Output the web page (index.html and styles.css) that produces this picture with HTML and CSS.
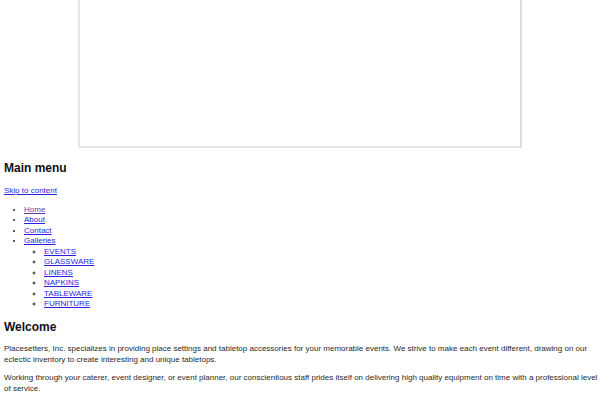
FILE: index.html
```html
<!DOCTYPE html>
<html lang="en">
<head>
    <meta charset="UTF-8">
    <meta name="viewport" content="width=device-width, initial-scale=1.0">
    <title>Placesetters, Inc.</title>
    <link rel="stylesheet" href="styles.css">
</head>
<body>
    <div class="slideshow"></div>

    <h2 class="menu-title">Main menu</h2>
    <a class="skip-link" href="#content">Skip to content</a>

    <ul class="menu">
        <li><a class="visited" href="#">Home</a></li>
        <li><a href="#">About</a></li>
        <li><a href="#">Contact</a></li>
        <li><a href="#">Galleries</a>
            <ul>
                <li><a href="#">EVENTS</a></li>
                <li><a href="#">GLASSWARE</a></li>
                <li><a href="#">LINENS</a></li>
                <li><a href="#">NAPKINS</a></li>
                <li><a href="#">TABLEWARE</a></li>
                <li><a href="#">FURNITURE</a></li>
            </ul>
        </li>
    </ul>

    <div id="content">
        <h2>Welcome</h2>
        <p>Placesetters, Inc. specializes in providing place settings and tabletop accessories for your memorable events. We strive to make each event different, drawing on our eclectic inventory to create interesting and unique tabletops.</p>
        <p>Working through your caterer, event designer, or event planner, our conscientious staff prides itself on delivering high quality equipment on time with a professional level of service.</p>
    </div>
</body>
</html>
```

FILE: styles.css
```css
body {
    margin: 0 0 0 4px;
    font-family: "Liberation Sans", Arial, sans-serif;
    font-size: 8px;
    line-height: 10.5px;
    color: #2a2a2a;
    background-color: white;
}
a {
    color: #2b1fe0;
}
a.visited {
    color: #6b3fa0;
}

/* Slideshow frame (top runs off the page) */
.slideshow {
    width: 440px;
    height: 146px;
    margin: -2px 0 0 74px;
    border: 2px solid #e6e6e6;
    border-right-color: #dcdcdc;
}

h2 {
    font-size: 12px;
    line-height: 16px;
    margin: 12px 0 10px;
    color: #111;
}
.skip-link {
    display: block;
    margin-bottom: 8px;
}
.menu {
    margin: 0;
    padding-left: 20px;
}
.menu ul {
    margin: 0;
    padding-left: 20px;
    list-style-type: circle;
}
#content h2 {
    margin-top: 9px;
    margin-bottom: 8px;
}
p {
    margin: 0 0 7px;
    line-height: 11px;
}
```
